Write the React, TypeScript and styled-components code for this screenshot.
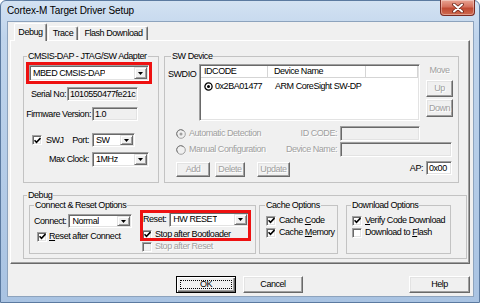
import React from "react";
import styled, { createGlobalStyle } from "styled-components";

const GlobalStyle = createGlobalStyle`
  html, body { margin: 0; padding: 0; background: #ffffff; }
  body { width: 480px; height: 303px; overflow: hidden; }
  * { box-sizing: border-box; }
`;

const Window = styled.div`
  width: 480px;
  height: 303px;
  display: flex;
  flex-direction: column;
  background: linear-gradient(180deg, #d3e2f2 0%, #bfd4ec 12%, #b3cbe7 60%, #a9c3e2 100%);
  border: 1px solid #5b7aa0;
  border-radius: 6px 6px 0 0;
  padding: 0 5px 5px 6px;
  font-family: "Liberation Sans", Arial, sans-serif;
  font-size: 9px;
  line-height: 11px;
  letter-spacing: -0.45px;
  color: #000;
`;

const TitleBar = styled.div`
  height: 20px;
  display: flex;
  align-items: flex-start;
  justify-content: space-between;
  flex: none;
`;

const Title = styled.span`
  font-size: 10px;
  letter-spacing: -0.1px;
  line-height: 19px;
  color: #000;
`;

const CloseButton = styled.div`
  width: 35px;
  height: 16px;
  margin-top: -1px;
  margin-right: -1px;
  border: 1px solid #7a2a22;
  border-top: none;
  border-radius: 0 0 4px 4px;
  background: linear-gradient(180deg, #e9a493 0%, #d5715d 45%, #c04a33 55%, #cf6a4f 100%);
  box-shadow: inset 0 0 0 1px rgba(255, 255, 255, 0.35);
  display: flex;
  align-items: center;
  justify-content: center;
`;

const Client = styled.div`
  flex: 1;
  display: flex;
  flex-direction: column;
  background: #f0f0f0;
  border: 1px solid #8da3bd;
`;

const TabRow = styled.div`
  height: 17px;
  margin-top: 1px;
  padding-left: 6px;
  display: flex;
  align-items: flex-end;
  flex: none;
  position: relative;
  z-index: 1;
`;

const Tab = styled.div<{ $w: number; $active?: boolean }>`
  width: ${(p) => p.$w}px;
  height: ${(p) => (p.$active ? 18 : 14)}px;
  margin-bottom: ${(p) => (p.$active ? -1 : 0)}px;
  margin-left: ${(p) => (p.$active ? 0 : 1)}px;
  background: #f0f0f0;
  border-top: 1px solid #ffffff;
  border-left: 1px solid #ffffff;
  border-right: 1px solid #696969;
  box-shadow: inset -1px 0 0 #a0a0a0;
  border-radius: 2px 2px 0 0;
  display: flex;
  justify-content: center;
  align-items: ${(p) => (p.$active ? "flex-start" : "center")};
  padding-top: ${(p) => (p.$active ? 3 : 0)}px;
  white-space: nowrap;
`;

const Panel = styled.div`
  width: 460px;
  height: 224px;
  margin-left: 2px;
  flex: none;
  border-top: 1px solid #ffffff;
  border-left: 1px solid #ffffff;
  border-right: 1px solid #696969;
  border-bottom: 1px solid #696969;
  box-shadow: inset -1px -1px 0 #a0a0a0;
  padding: 10px 0 0 12px;
  display: flex;
  flex-direction: column;
`;

const TopRow = styled.div`
  display: flex;
  gap: 5px;
`;

const Group = styled.fieldset<{ $w: number; $h: number; $mt?: number; $ml?: number }>`
  width: ${(p) => p.$w}px;
  height: ${(p) => p.$h}px;
  margin: ${(p) => p.$mt ?? 0}px 0 0 ${(p) => p.$ml ?? 0}px;
  padding: 0;
  min-width: 0;
  border: 1px solid #c3c3c3;
  flex: none;
`;

const Legend = styled.legend<{ $ml: number }>`
  margin-left: ${(p) => p.$ml}px;
  padding: 0 1px;
  line-height: 10px;
  white-space: nowrap;
`;

const GroupBody = styled.div<{ $pl?: number; $pt?: number; $row?: boolean }>`
  display: flex;
  flex-direction: ${(p) => (p.$row ? "row" : "column")};
  align-items: flex-start;
  padding-left: ${(p) => p.$pl ?? 0}px;
  padding-top: ${(p) => p.$pt ?? 0}px;
`;

const Row = styled.div<{
  $mt?: number;
  $pl?: number;
  $pr?: number;
  $h?: number;
  $justify?: string;
  $align?: string;
}>`
  display: flex;
  width: 100%;
  align-items: ${(p) => p.$align ?? "center"};
  justify-content: ${(p) => p.$justify ?? "flex-start"};
  margin-top: ${(p) => p.$mt ?? 0}px;
  padding-left: ${(p) => p.$pl ?? 0}px;
  padding-right: ${(p) => p.$pr ?? 0}px;
  ${(p) => (p.$h ? `height: ${p.$h}px;` : "")}
  flex: none;
`;

const Label = styled.span<{ $disabled?: boolean; $mr?: number; $ml?: number; $w?: number; $right?: boolean; $mt?: number }>`
  white-space: nowrap;
  color: ${(p) => (p.$disabled ? "#a0a0a0" : "#000")};
  text-shadow: ${(p) => (p.$disabled ? "1px 1px 0 #ffffff" : "none")};
  margin-right: ${(p) => p.$mr ?? 0}px;
  margin-left: ${(p) => p.$ml ?? 0}px;
  margin-top: ${(p) => p.$mt ?? 0}px;
  ${(p) => (p.$w ? `width: ${p.$w}px; flex: none;` : "")}
  ${(p) => (p.$right ? "text-align: right; flex: 1;" : "")}
`;

const Field = styled.div<{ $w: number; $h?: number; $bg?: string; $mr?: number }>`
  width: ${(p) => p.$w}px;
  height: ${(p) => p.$h ?? 14}px;
  margin-right: ${(p) => p.$mr ?? 0}px;
  flex: none;
  background: ${(p) => p.$bg ?? "#ffffff"};
  border: 1px solid;
  border-color: #a0a0a0 #ffffff #ffffff #a0a0a0;
  box-shadow: inset 1px 1px 0 #696969, inset -1px -1px 0 #e3e3e3;
  padding-left: 2px;
  display: flex;
  align-items: center;
  white-space: nowrap;
  overflow: hidden;
`;

const Combo = styled.div<{ $w: number; $h?: number; $mr?: number }>`
  width: ${(p) => p.$w}px;
  height: ${(p) => p.$h ?? 15}px;
  margin-right: ${(p) => p.$mr ?? 0}px;
  flex: none;
  background: #ffffff;
  border: 1px solid;
  border-color: #a0a0a0 #ffffff #ffffff #a0a0a0;
  box-shadow: inset 1px 1px 0 #696969, inset -1px -1px 0 #e3e3e3;
  padding: 1px;
  display: flex;
  align-items: stretch;
  justify-content: space-between;
`;

const ComboText = styled.span`
  padding-left: 2px;
  display: flex;
  align-items: center;
  white-space: nowrap;
  overflow: hidden;
`;

const DropButton = styled.div`
  width: 13px;
  flex: none;
  background: #f0f0f0;
  border: 1px solid;
  border-color: #e3e3e3 #696969 #696969 #e3e3e3;
  box-shadow: inset 1px 1px 0 #ffffff, inset -1px -1px 0 #a0a0a0;
  display: flex;
  align-items: center;
  justify-content: center;
`;

const Arrow = () => (
  <svg width="5" height="3" viewBox="0 0 5 3">
    <path d="M0 0 H5 L2.5 3 Z" fill="#000" />
  </svg>
);

const RedFrame = styled.div<{ $w: number; $h: number }>`
  width: ${(p) => p.$w}px;
  height: ${(p) => p.$h}px;
  border: 3px solid #ee1111;
  flex: none;
  margin-top: 1px;
`;

const RedOverlay = styled.div`
  position: absolute;
  left: 0;
  top: 0;
  width: 111px;
  height: 31px;
  border: 3px solid #ee1111;
  pointer-events: none;
  z-index: 2;
`;

const Box = styled.span<{ $disabled?: boolean }>`
  width: 10px;
  height: 10px;
  flex: none;
  background: ${(p) => (p.$disabled ? "#f0f0f0" : "#ffffff")};
  border: 1px solid;
  border-color: #a0a0a0 #ffffff #ffffff #a0a0a0;
  box-shadow: inset 1px 1px 0 #696969, inset -1px -1px 0 #e3e3e3;
  display: flex;
  align-items: center;
  justify-content: center;
`;

const CheckOption = styled.div<{ $mt?: number; $ml?: number; $gap?: number }>`
  display: flex;
  align-items: center;
  height: 11px;
  gap: ${(p) => p.$gap ?? 3}px;
  margin-top: ${(p) => p.$mt ?? 0}px;
  margin-left: ${(p) => p.$ml ?? 0}px;
  white-space: nowrap;
  flex: none;
`;

const Check = ({ checked, disabled }: { checked?: boolean; disabled?: boolean }) => (
  <Box $disabled={disabled}>
    {checked && (
      <svg width="7" height="7" viewBox="0 0 7 7">
        <path d="M0.5 3.2 L2.5 5.3 L6.5 1" fill="none" stroke="#000" strokeWidth="1.6" />
      </svg>
    )}
  </Box>
);

const Radio = ({ on }: { on?: boolean }) => (
  <svg width="10" height="10" viewBox="0 0 10 10" style={{ flex: "none" }}>
    <circle cx="5" cy="5" r="4.3" fill="#f0f0f0" stroke="#a0a0a0" strokeWidth="1" />
    <path d="M1.8 7.5 A4 4 0 0 1 7.5 1.8" fill="none" stroke="#808080" strokeWidth="1" />
    {on && <circle cx="5" cy="5" r="1.5" fill="#a0a0a0" />}
  </svg>
);

const ListBox = styled.div`
  width: 221px;
  height: 57px;
  margin-top: 3px;
  flex: none;
  background: #ffffff;
  border: 1px solid;
  border-color: #a0a0a0 #ffffff #ffffff #a0a0a0;
  box-shadow: inset 1px 1px 0 #696969, inset -1px -1px 0 #e3e3e3;
  padding: 1px;
  display: flex;
  flex-direction: column;
`;

const ListHeader = styled.div`
  height: 12px;
  display: flex;
  border-bottom: 1px solid #d5d5d5;
  flex: none;
`;

const HeaderCell = styled.div<{ $w?: number; $pl: number }>`
  ${(p) => (p.$w ? `width: ${p.$w}px; flex: none;` : "flex: 1;")}
  padding-left: ${(p) => p.$pl}px;
  border-right: 1px solid #d5d5d5;
  display: flex;
  align-items: center;
  white-space: nowrap;
`;

const ListRow = styled.div`
  display: flex;
  align-items: center;
  height: 12px;
  margin-top: 2px;
`;

const Cell = styled.div<{ $w?: number; $pl: number }>`
  ${(p) => (p.$w ? `width: ${p.$w}px; flex: none;` : "flex: 1;")}
  padding-left: ${(p) => p.$pl}px;
  display: flex;
  align-items: center;
  gap: 2px;
  white-space: nowrap;
`;

const Selected = () => (
  <svg width="9" height="9" viewBox="0 0 9 9" style={{ flex: "none" }}>
    <circle cx="4.5" cy="4.5" r="3.6" fill="#fff" stroke="#000" strokeWidth="1.3" />
    <circle cx="4.5" cy="4.5" r="1.5" fill="#000" />
  </svg>
);

const MoveColumn = styled.div`
  width: 27px;
  margin-left: 6px;
  display: flex;
  flex-direction: column;
  align-items: center;
  flex: none;
`;

const PushButton = styled.div<{ $w: number; $h?: number; $disabled?: boolean; $ml?: number; $mt?: number }>`
  width: ${(p) => p.$w}px;
  height: ${(p) => p.$h ?? 15}px;
  margin-left: ${(p) => p.$ml ?? 0}px;
  margin-top: ${(p) => p.$mt ?? 0}px;
  flex: none;
  background: #f0f0f0;
  color: ${(p) => (p.$disabled ? "#a0a0a0" : "#000")};
  text-shadow: ${(p) => (p.$disabled ? "1px 1px 0 #ffffff" : "none")};
  border: 1px solid;
  border-color: #ffffff #696969 #696969 #ffffff;
  box-shadow: inset -1px -1px 0 #a0a0a0, inset 1px 1px 0 #e3e3e3;
  display: flex;
  align-items: center;
  justify-content: center;
  white-space: nowrap;
`;

const DefaultButton = styled.div<{ $w: number; $h: number }>`
  width: ${(p) => p.$w}px;
  height: ${(p) => p.$h}px;
  flex: none;
  background: #f0f0f0;
  border: 1px solid #000;
  box-shadow: inset 1px 1px 0 #ffffff, inset -1px -1px 0 #696969, inset -2px -2px 0 #a0a0a0;
  padding: 3px;
  display: flex;
`;

const FocusRing = styled.span`
  flex: 1;
  border: 1px dotted #000;
  display: flex;
  align-items: center;
  justify-content: center;
`;

const ButtonBar = styled.div`
  display: flex;
  align-items: flex-start;
  margin-top: 12px;
  padding-left: 168px;
  padding-right: 3px;
  flex: none;
`;

const Column = styled.div<{ $w: number; $pl?: number; $pt?: number; $relative?: boolean }>`
  width: ${(p) => p.$w}px;
  flex: none;
  display: flex;
  flex-direction: column;
  padding-left: ${(p) => p.$pl ?? 0}px;
  padding-top: ${(p) => p.$pt ?? 0}px;
  ${(p) => (p.$relative ? "position: relative;" : "")}
`;

const Spacer = styled.div`
  flex: 1;
`;

export default function App() {
  return (
    <>
      <GlobalStyle />
      <Window>
        <TitleBar>
          <Title>Cortex-M Target Driver Setup</Title>
          <CloseButton>
            <svg width="12" height="10" viewBox="0 0 12 10">
              <path d="M2 1.5 L10 8.5 M10 1.5 L2 8.5" stroke="#6a2418" strokeWidth="3.6" strokeLinecap="round" />
              <path d="M2 1.5 L10 8.5 M10 1.5 L2 8.5" stroke="#ffffff" strokeWidth="2" strokeLinecap="round" />
            </svg>
          </CloseButton>
        </TitleBar>
        <Client>
          <TabRow>
            <Tab $active $w={33}>Debug</Tab>
            <Tab $w={30}>Trace</Tab>
            <Tab $w={69}>Flash Download</Tab>
          </TabRow>
          <Panel>
            <TopRow>
              <Group $w={136} $h={132}>
                <Legend $ml={3}>CMSIS-DAP - JTAG/SW Adapter</Legend>
                <GroupBody $pl={2}>
                  <RedFrame $w={126} $h={22}>
                    <Combo $w={120} $h={16}>
                      <ComboText>MBED CMSIS-DAP</ComboText>
                      <DropButton>
                        <Arrow />
                      </DropButton>
                    </Combo>
                  </RedFrame>
                  <Row $mt={3} $justify="flex-end" $pr={20}>
                    <Label $mr={1}>Serial No:</Label>
                    <Field $w={71} $bg="#f0f0f0">1010550477fe21c</Field>
                  </Row>
                  <Row $mt={6} $justify="flex-end" $pr={20}>
                    <Label $mr={1}>Firmware Version:</Label>
                    <Field $w={46} $bg="#f0f0f0">1.0</Field>
                  </Row>
                  <Row $mt={12} $pl={6}>
                    <CheckOption $gap={4}>
                      <Check checked />
                      <span>SWJ</span>
                    </CheckOption>
                    <Label $right $mr={3}>Port:</Label>
                    <Combo $w={43} $h={14} $mr={23}>
                      <ComboText>SW</ComboText>
                      <DropButton>
                        <Arrow />
                      </DropButton>
                    </Combo>
                  </Row>
                  <Row $mt={5}>
                    <Label $right $mr={3}>Max Clock:</Label>
                    <Combo $w={57} $h={15} $mr={9}>
                      <ComboText>1MHz</ComboText>
                      <DropButton>
                        <Arrow />
                      </DropButton>
                    </Combo>
                  </Row>
                </GroupBody>
              </Group>

              <Group $w={295} $h={132}>
                <Legend $ml={6}>SW Device</Legend>
                <GroupBody $pl={3}>
                  <Row $align="flex-start">
                    <Label $w={31} $mt={8}>SWDIO</Label>
                    <ListBox>
                      <ListHeader>
                        <HeaderCell $w={67} $pl={3}>IDCODE</HeaderCell>
                        <HeaderCell $w={98} $pl={6}>Device Name</HeaderCell>
                        <HeaderCell $pl={0} />
                      </ListHeader>
                      <ListRow>
                        <Cell $w={67} $pl={3}>
                          <Selected />
                          <span>0x2BA01477</span>
                        </Cell>
                        <Cell $pl={7}>ARM CoreSight SW-DP</Cell>
                      </ListRow>
                    </ListBox>
                    <MoveColumn>
                      <Label $disabled $mt={4}>Move</Label>
                      <PushButton $disabled $w={27} $h={17} $mt={4}>Up</PushButton>
                      <PushButton $disabled $w={27} $h={18} $mt={2}>Down</PushButton>
                    </MoveColumn>
                  </Row>
                  <Row $mt={5} $pl={8} $h={15}>
                    <CheckOption $gap={3}>
                      <Radio on />
                      <Label $disabled>Automatic Detection</Label>
                    </CheckOption>
                    <Label $disabled $right $mr={3}>ID CODE:</Label>
                    <Field $w={80} $h={15} $bg="#f0f0f0" $mr={38} />
                  </Row>
                  <Row $mt={1} $pl={8} $h={15}>
                    <CheckOption $gap={3}>
                      <Radio />
                      <Label $disabled>Manual Configuration</Label>
                    </CheckOption>
                    <Label $disabled $right $mr={3}>Device Name:</Label>
                    <Field $w={112} $h={15} $bg="#f0f0f0" $mr={6} />
                  </Row>
                  <Row $mt={4} $pl={8} $align="flex-start">
                    <PushButton $disabled $w={34} $mt={1}>Add</PushButton>
                    <PushButton $disabled $w={30} $ml={5} $mt={1}>Delete</PushButton>
                    <PushButton $disabled $w={33} $ml={12} $mt={1}>Update</PushButton>
                    <Spacer />
                    <Label $mr={3} $mt={2}>AP:</Label>
                    <Field $w={26} $h={14} $mr={6}>0x00</Field>
                  </Row>
                </GroupBody>
              </Group>
            </TopRow>

            <Group $w={444} $h={69} $mt={7}>
              <Legend $ml={3}>Debug</Legend>
              <GroupBody $row $pl={5}>
                <Group $w={227} $h={54}>
                  <Legend $ml={4}>Connect &amp; Reset Options</Legend>
                  <GroupBody $row>
                    <Column $w={110} $pl={4} $pt={4}>
                      <Row>
                        <Label $mr={2}>Connect:</Label>
                        <Combo $w={64} $h={14}>
                          <ComboText>Normal</ComboText>
                          <DropButton>
                            <Arrow />
                          </DropButton>
                        </Combo>
                      </Row>
                      <CheckOption $mt={3} $ml={3} $gap={2}>
                        <Check checked />
                        <span>
                          <u>R</u>eset after Connect
                        </span>
                      </CheckOption>
                    </Column>
                    <Column $w={111} $pl={2} $pt={2} $relative>
                      <RedOverlay />
                      <Row>
                        <Label $ml={1} $mr={3}>Reset:</Label>
                        <Combo $w={80} $h={15}>
                          <ComboText>HW RESET</ComboText>
                          <DropButton>
                            <Arrow />
                          </DropButton>
                        </Combo>
                      </Row>
                      <CheckOption $mt={2} $gap={3}>
                        <Check checked />
                        <span>Stop after Bootloader</span>
                      </CheckOption>
                      <CheckOption $mt={1} $gap={3}>
                        <Check disabled />
                        <Label $disabled>Stop after Reset</Label>
                      </CheckOption>
                    </Column>
                  </GroupBody>
                </Group>

                <Group $w={79} $h={54} $ml={3}>
                  <Legend $ml={5}>Cache Options</Legend>
                  <GroupBody $pl={6} $pt={5}>
                    <CheckOption>
                      <Check checked />
                      <span>
                        Cache <u>C</u>ode
                      </span>
                    </CheckOption>
                    <CheckOption $mt={1}>
                      <Check checked />
                      <span>
                        Cache <u>M</u>emory
                      </span>
                    </CheckOption>
                  </GroupBody>
                </Group>

                <Group $w={105} $h={54} $ml={8}>
                  <Legend $ml={4}>Download Options</Legend>
                  <GroupBody $pl={5} $pt={5}>
                    <CheckOption>
                      <Check checked />
                      <span>
                        <u>V</u>erify Code Download
                      </span>
                    </CheckOption>
                    <CheckOption $mt={1}>
                      <Check />
                      <span>
                        Download to <u>F</u>lash
                      </span>
                    </CheckOption>
                  </GroupBody>
                </Group>
              </GroupBody>
            </Group>
          </Panel>

          <ButtonBar>
            <DefaultButton $w={60} $h={17}>
              <FocusRing>OK</FocusRing>
            </DefaultButton>
            <PushButton $w={60} $h={17} $ml={7}>Cancel</PushButton>
            <Spacer />
            <PushButton $w={61} $h={17}>Help</PushButton>
          </ButtonBar>
        </Client>
      </Window>
    </>
  );
}
